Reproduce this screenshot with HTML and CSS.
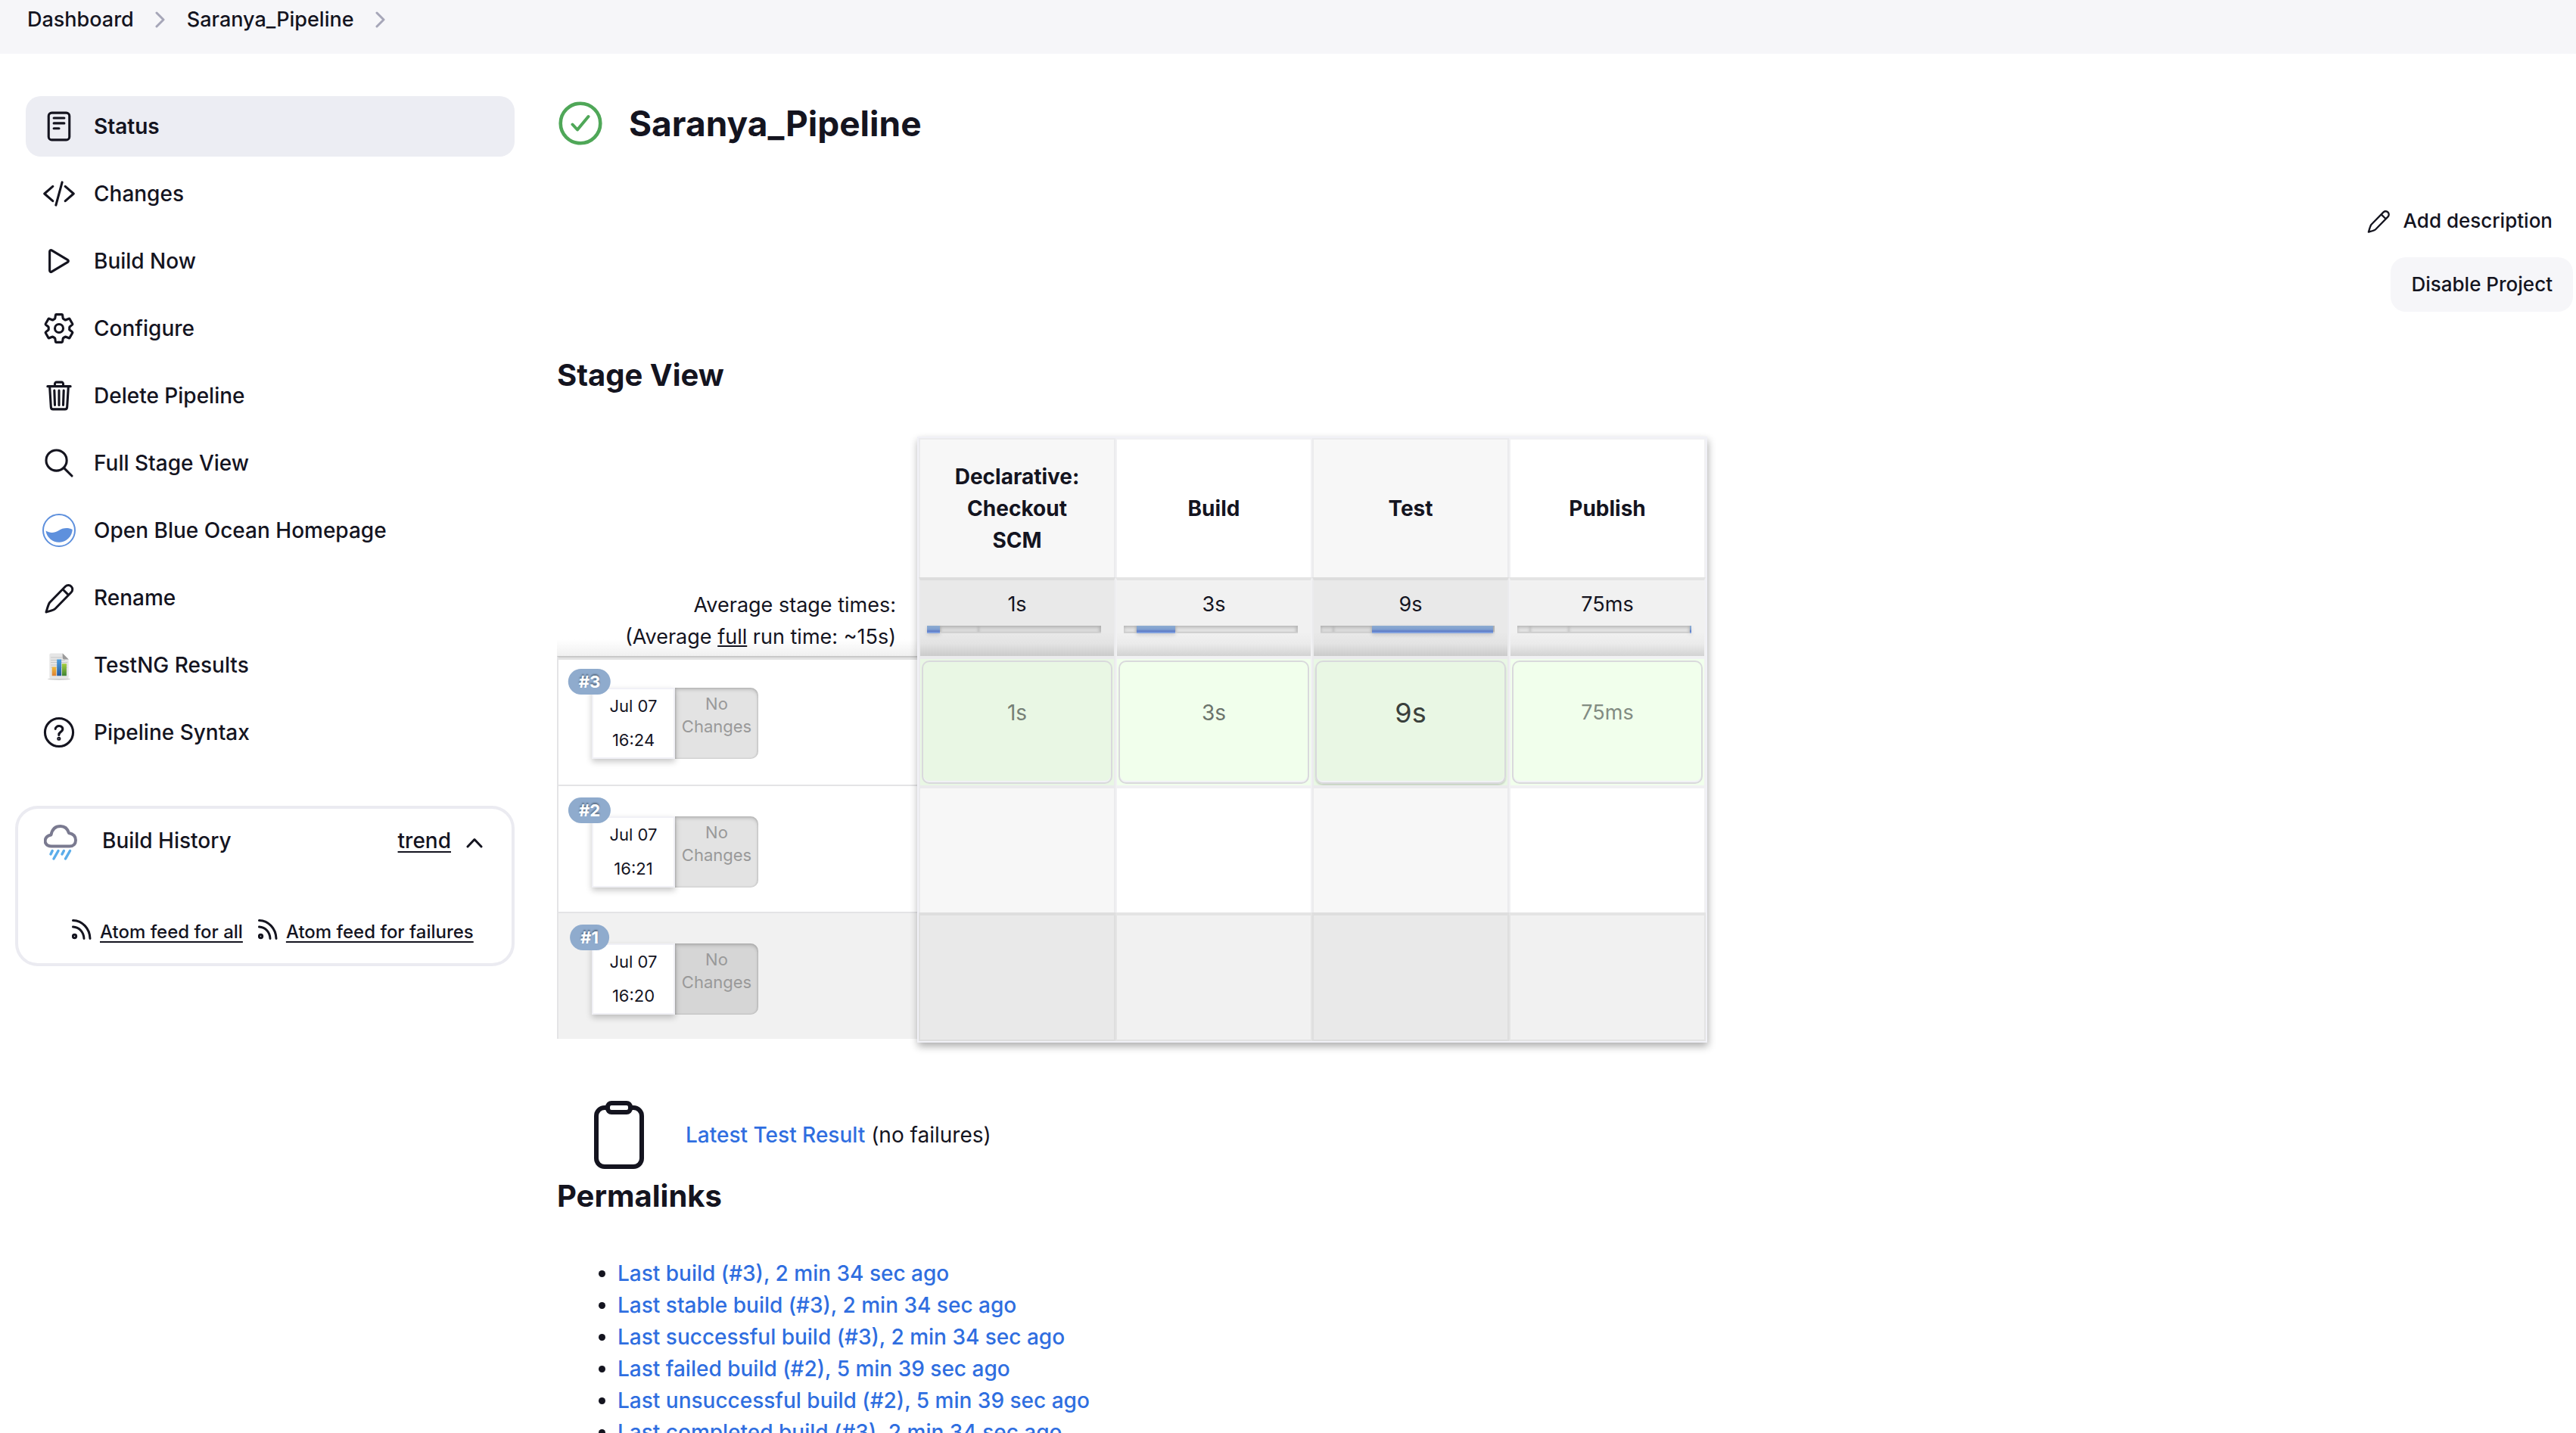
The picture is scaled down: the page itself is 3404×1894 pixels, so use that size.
FILE: index.html
```html
<!DOCTYPE html>
<html lang="en">
<head>
  <meta charset="utf-8">
  <title>Saranya_Pipeline [Jenkins]</title>
  <link rel="stylesheet" href="styles.css">
</head>
<body>
  <nav class="crumbs" aria-label="Breadcrumb">
    <a href="#">Dashboard</a>
    <svg class="crumb-sep" viewBox="0 0 14 22"><path d="M2 2l9 9-9 9"/></svg>
    <a href="#">Saranya_Pipeline</a>
    <svg class="crumb-sep" viewBox="0 0 14 22"><path d="M2 2l9 9-9 9"/></svg>
  </nav>

  <div class="page">
    <aside class="side">
      <nav class="tasks" aria-label="Tasks">
        <a class="task task-active" href="#">
          <svg class="icon" viewBox="0 0 512 512"><rect x="96" y="48" width="320" height="416" rx="48"/><path d="M176 128h160M176 208h160M176 288h80"/></svg>
          Status
        </a>
        <a class="task" href="#">
          <svg class="icon" viewBox="0 0 512 512"><path d="M160 368L32 256l128-112M352 368l128-112-128-112M304 80l-96 352"/></svg>
          Changes
        </a>
        <a class="task" href="#">
          <svg class="icon" viewBox="0 0 512 512"><path d="M112 111v290c0 17.44 17 28.52 31 20.16l247.9-148.37c12.12-7.25 12.12-26.33 0-33.58L143 90.84c-14-8.36-31 2.72-31 20.16z"/></svg>
          Build Now
        </a>
        <a class="task" href="#">
          <svg class="icon" viewBox="0 0 512 512"><circle cx="256" cy="256" r="64"/><path d="M416.39 256a154.34 154.34 0 01-1.53 20.79l45.21 35.46a10.81 10.81 0 012.45 13.75l-42.77 74a10.81 10.81 0 01-13.14 4.59l-44.9-18.08a16.11 16.11 0 00-15.17 1.75A164.48 164.48 0 01325 400.8a15.94 15.94 0 00-8.82 12.14l-6.73 47.89a11.08 11.08 0 01-10.68 9.17h-85.54a11.11 11.11 0 01-10.69-8.87l-6.72-47.82a16.07 16.07 0 00-9-12.22 155.3 155.3 0 01-21.46-12.57 16 16 0 00-15.11-1.71l-44.89 18.07a10.81 10.81 0 01-13.14-4.58l-42.77-74a10.8 10.8 0 012.45-13.75l38.21-30a16.05 16.05 0 006-14.08c-.36-4.17-.58-8.33-.58-12.5s.21-8.27.58-12.35a16 16 0 00-6.07-13.94l-38.19-30A10.81 10.81 0 0149.48 186l42.77-74a10.81 10.81 0 0113.14-4.59l44.9 18.08a16.11 16.11 0 0015.17-1.75A164.48 164.48 0 01187 111.2a15.94 15.94 0 008.82-12.14l6.73-47.89A11.08 11.08 0 01213.23 42h85.54a11.11 11.11 0 0110.69 8.87l6.72 47.82a16.07 16.07 0 009 12.22 155.3 155.3 0 0121.46 12.57 16 16 0 0015.11 1.71l44.89-18.07a10.81 10.81 0 0113.14 4.58l42.77 74a10.8 10.8 0 01-2.45 13.75l-38.21 30a16.05 16.05 0 00-6.05 14.08c.33 4.14.55 8.3.55 12.47z"/></svg>
          Configure
        </a>
        <a class="task" href="#">
          <svg class="icon" viewBox="0 0 512 512"><path d="M112 112l20 320c.95 18.49 14.4 32 32 32h184c17.67 0 30.87-13.51 32-32l20-320M80 112h352M192 112V72a23.93 23.93 0 0124-24h80a23.93 23.93 0 0124 24v40M256 176v224M184 176l8 224M328 176l-8 224"/></svg>
          Delete Pipeline
        </a>
        <a class="task" href="#">
          <svg class="icon" viewBox="0 0 512 512"><circle cx="216" cy="216" r="158"/><path d="M330 330l124 124"/></svg>
          Full Stage View
        </a>
        <a class="task" href="#">
          <svg class="icon-art" viewBox="0 0 44 44"><circle cx="22" cy="22" r="21" fill="#fff" stroke="#5e90dd" stroke-width="2"/><path d="M4.500 22.500C10 26 16 25.500 21 22.500c6-4 13-4.500 18.700-1.500A17.700 17.700 0 0 1 4.500 22.500z" fill="#5e90dd"/></svg>
          Open Blue Ocean Homepage
        </a>
        <a class="task" href="#">
          <svg class="icon icon-fine" viewBox="0 0 44 44"><path d="M30.500 7L9.500 28.500C8 30.500 6.500 36 5 41c5-1.500 10-2.500 12-4.500L38 15a5.400 5.400 0 0 0-7.500-8zM26.800 10.800l7.600 7.600"/></svg>
          Rename
        </a>
        <a class="task" href="#">
          <svg class="icon-art" viewBox="0 0 44 44">
            <defs>
              <linearGradient id="barOrange" x1="0" y1="0" x2="0" y2="1"><stop offset="0" stop-color="#f0bb3c"/><stop offset="1" stop-color="#dd8135"/></linearGradient>
              <linearGradient id="barBlue" x1="0" y1="0" x2="0" y2="1"><stop offset="0" stop-color="#4b9fe0"/><stop offset="1" stop-color="#25599f"/></linearGradient>
              <linearGradient id="barGreen" x1="0" y1="0" x2="0" y2="1"><stop offset="0" stop-color="#a5cf3e"/><stop offset="1" stop-color="#3f8436"/></linearGradient>
            </defs>
            <ellipse cx="22" cy="40.500" rx="15" ry="1.500" fill="#d2d2d2"/>
            <path d="M11.300 6.500h15.400l8 8v23.500a2 2 0 0 1-2 2H11.300a2 2 0 0 1-2-2V8.500a2 2 0 0 1 2-2z" fill="#e6e6e6"/>
            <path d="M11.500 12h14M11.500 15.500h18M11.500 18.500h21M11.500 22h21M11.500 25h21" stroke="#c6c6c6" fill="none"/>
            <path d="M26.700 6.500l8 8h-6a2 2 0 0 1-2-2z" fill="#9a9a9a"/>
            <rect x="12.700" y="24.500" width="5.600" height="11.700" fill="url(#barOrange)"/>
            <rect x="19.200" y="14.500" width="5.900" height="21.700" fill="url(#barBlue)"/>
            <rect x="25.900" y="20.200" width="6" height="16" fill="url(#barGreen)"/>
          </svg>
          TestNG Results
        </a>
        <a class="task" href="#">
          <svg class="icon" viewBox="0 0 512 512"><circle cx="256" cy="256" r="216"/><path d="M200 202.290s.84-17.500 19.570-32.570C230.680 160.770 244 158.180 256 158c10.930-.14 20.690 1.670 26.530 4.450 10 4.760 29.470 16.380 29.470 41.090 0 26-17 37.810-36.370 50.800S254 281.430 254 296"/><circle cx="254" cy="352" r="12"/></svg>
          Pipeline Syntax
        </a>
      </nav>

      <section class="history">
        <div class="history-head">
          <svg class="cloud" viewBox="0 0 44 48"><path d="M10 28.500C2 28.500.5 22 2.500 18c1.500-3 4.500-4 7-4.500C11 5 16 2 22 2c6 0 9.500 4 11 9 5 1 9 4 9 9.500 0 5-3 8-8 8z" stroke="#7a7a90" stroke-width="4"/><path d="M11.200 34.500L9 39M19 34.500L13 45M26.400 34.500L24 39M34.500 34.500l-6 10.500" stroke="#5badea" stroke-width="3.500"/></svg>
          <span class="history-title">Build History</span>
          <a class="underlined" href="#">trend</a>
          <button class="collapse" type="button" aria-label="Collapse"><svg viewBox="0 0 22 14"><path d="M2 12l9-9.500 9 9.500"/></svg></button>
        </div>
        <div class="feeds">
          <svg class="rss" viewBox="0 0 26 34"><path d="M1.500 1.500C14 2 23.500 12 24 25.500M1.500 10C10 10.500 15.500 17 16 25.500"/><circle cx="3.500" cy="22.500" r="2.200"/></svg>
          <a class="underlined" href="#">Atom feed for all</a>
          <svg class="rss rss-next" viewBox="0 0 26 34"><path d="M1.500 1.500C14 2 23.500 12 24 25.500M1.500 10C10 10.500 15.500 17 16 25.500"/><circle cx="3.500" cy="22.500" r="2.200"/></svg>
          <a class="underlined" href="#">Atom feed for failures</a>
        </div>
      </section>
    </aside>

    <main class="main">
      <div class="title-row">
        <svg class="status-icon" viewBox="0 0 62 62"><circle cx="31" cy="31" r="26.300" stroke-width="4.600"/><path d="M20.500 32.500l6.500 7L41.500 22" stroke-width="4"/></svg>
        <h1>Saranya_Pipeline</h1>
      </div>
      <div class="actions">
        <button class="button button-plain" type="button">
          <svg class="icon-small icon-fine" viewBox="0 0 44 44"><path d="M30.500 7L9.500 28.500C8 30.500 6.500 36 5 41c5-1.500 10-2.500 12-4.500L38 15a5.400 5.400 0 0 0-7.500-8zM26.800 10.800l7.600 7.600"/></svg>
          Add description
        </button>
        <button class="button" type="button">Disable Project</button>
      </div>

      <h2>Stage View</h2>
      <div class="stage-view">
        <div class="runs">
          <div class="averages">
            <div>Average stage times:</div>
            <div>(Average <u>full</u> run time: ~15s)</div>
          </div>
          <div class="run run-first">
            <div class="run-date"><a class="badge" href="#">#3</a><div>Jul 07</div><div>16:24</div></div>
            <div class="run-changes">No<br>Changes</div>
          </div>
          <div class="run">
            <div class="run-date"><a class="badge" href="#">#2</a><div>Jul 07</div><div>16:21</div></div>
            <div class="run-changes">No<br>Changes</div>
          </div>
          <div class="run run-shaded">
            <div class="run-date"><a class="badge" href="#">#1</a><div>Jul 07</div><div>16:20</div></div>
            <div class="run-changes">No<br>Changes</div>
          </div>
        </div>
        <table class="stages">
          <thead>
            <tr class="row-names"><th>Declarative: Checkout SCM</th><th>Build</th><th>Test</th><th>Publish</th></tr>
          </thead>
          <tbody>
            <tr class="row-totals">
              <td>1s<div class="bar"><i class="on"></i><i></i><i></i><i></i></div></td>
              <td>3s<div class="bar"><i></i><i class="on"></i><i></i><i></i></div></td>
              <td>9s<div class="bar"><i></i><i></i><i class="on"></i><i></i></div></td>
              <td>75ms<div class="bar"><i></i><i></i><i></i><i class="on"></i></div></td>
            </tr>
            <tr class="row-run row-ok">
              <td><div class="result result-dim">1s</div></td>
              <td><div class="result result-mid">3s</div></td>
              <td><div class="result result-long">9s</div></td>
              <td><div class="result">75ms</div></td>
            </tr>
            <tr class="row-run row-empty"><td></td><td></td><td></td><td></td></tr>
            <tr class="row-run row-shaded"><td></td><td></td><td></td><td></td></tr>
          </tbody>
        </table>
      </div>

      <div class="test-result">
        <svg class="clipboard" viewBox="0 0 66 90"><rect x="3" y="9" width="60" height="78" rx="11"/><rect x="18" y="3" width="30" height="12" rx="5"/></svg>
        <div><a class="link" href="#">Latest Test Result</a> (no failures)</div>
      </div>

      <h2 class="permalinks-title">Permalinks</h2>
      <ul class="permalinks">
        <li><a class="link" href="#">Last build (#3), 2 min 34 sec ago</a></li>
        <li><a class="link" href="#">Last stable build (#3), 2 min 34 sec ago</a></li>
        <li><a class="link" href="#">Last successful build (#3), 2 min 34 sec ago</a></li>
        <li><a class="link" href="#">Last failed build (#2), 5 min 39 sec ago</a></li>
        <li><a class="link" href="#">Last unsuccessful build (#2), 5 min 39 sec ago</a></li>
        <li><a class="link" href="#">Last completed build (#3), 2 min 34 sec ago</a></li>
      </ul>
    </main>
  </div>
</body>
</html>
```
FILE: styles.css
```css
* {
  box-sizing: border-box;
}

body {
  margin: 0;
  height: 100vh;
  overflow: hidden;
  background: #fff;
  color: #14141f;
  font: 400 27px/42px Inter, "Liberation Sans", sans-serif;
}

a {
  color: inherit;
  text-decoration: none;
}

button {
  border: 0;
  padding: 0;
  background: none;
  color: inherit;
  font: inherit;
}

svg {
  display: block;
  flex: none;
  fill: none;
  stroke-linecap: round;
  stroke-linejoin: round;
}

h1,
h2 {
  margin: 0;
  font-weight: 700;
}

h1 {
  font-size: 46px;
  line-height: 62px;
}

h2 {
  font-size: 40px;
  line-height: 52px;
}

/* Breadcrumb bar */
.crumbs {
  display: flex;
  align-items: center;
  gap: 28px;
  padding: 5px 36px 24px;
  background: #f6f6f9;
  font-weight: 500;
}

.crumb-sep {
  width: 14px;
  height: 22px;
  stroke: #a6a6b8;
  stroke-width: 3;
}

.page {
  display: grid;
  grid-template-columns: 680px 1fr;
}

/* Sidebar */
.side {
  padding: 56px 0 0 20px;
}

.tasks {
  display: flex;
  flex-direction: column;
  gap: 9px;
  padding-left: 14px;
}

.task {
  display: flex;
  align-items: center;
  gap: 24px;
  height: 80px;
  padding-left: 22px;
  border-radius: 20px;
  font-size: 28px;
  font-weight: 500;
}

.task-active {
  background: #ecedf3;
  font-weight: 600;
}

.icon,
.icon-art {
  width: 44px;
  height: 44px;
}

.icon {
  stroke: #14141f;
  stroke-width: 36;
}

.icon-small {
  width: 34px;
  height: 34px;
  stroke: #14141f;
}

.icon-fine {
  stroke-width: 3;
}

.history {
  margin-top: 57px;
  padding: 19px 38px 24px 34px;
  border: 4px solid #ebebf1;
  border-radius: 30px;
}

.history-head {
  display: flex;
  align-items: center;
  height: 46px;
  font-size: 28px;
  font-weight: 500;
}

.cloud {
  width: 44px;
  height: 48px;
  margin-top: 6px;
}

.history-title {
  flex: 1;
  padding-left: 33px;
}

.underlined {
  text-decoration: underline;
  text-decoration-thickness: 2px;
  text-underline-offset: 4px;
}

.collapse {
  margin-left: 20px;
}

.collapse svg {
  width: 22px;
  height: 14px;
  margin-top: 6px;
  stroke: #14141f;
  stroke-width: 3;
}

.feeds {
  display: flex;
  gap: 11px;
  margin-top: 81px;
  padding-left: 37px;
  font-size: 24px;
  font-weight: 500;
  line-height: 34px;
  white-space: nowrap;
}

.rss {
  width: 26px;
  height: 34px;
  stroke: #14141f;
  stroke-width: 3;
}

.rss-next {
  margin-left: 9px;
}

/* Main panel */
.main {
  min-width: 0;
  padding: 61px 4px 0 56px;
}

.title-row {
  display: flex;
  align-items: center;
  gap: 33px;
}

.status-icon {
  width: 62px;
  height: 62px;
  stroke: #4fa758;
}

.actions {
  display: flex;
  flex-direction: column;
  align-items: flex-end;
  gap: 12px;
  margin: 62px 0 58px;
}

.button {
  display: flex;
  align-items: center;
  gap: 16px;
  height: 72px;
  padding: 0 27px;
  border-radius: 20px;
  background: #f6f6f9;
  font-size: 26px;
  font-weight: 500;
}

.button-plain {
  background: none;
}

/* Stage view */
.stage-view {
  display: flex;
  margin-top: 55px;
}

.runs {
  width: 476px;
}

.averages {
  display: flex;
  flex-direction: column;
  justify-content: flex-end;
  height: 290px;
  padding: 0 28px 4px 0;
  background: linear-gradient(to top, #f0f0f0, #fff 22px);
  text-align: right;
}

.run {
  display: flex;
  height: 168px;
  padding: 40px 0 0 44px;
  border: 2px solid #e4e4e6;
  border-width: 2px 0 0 2px;
}

.run-first {
  height: 170px;
  border-top-color: #c9c9c9;
  box-shadow: inset 0 3px 0 #e2e2e2;
}

.run-shaded {
  background: #f1f1f1;
}

.run-date {
  position: relative;
  width: 110px;
  height: 94px;
  border: 2px solid #f1f1f6;
  background: #fff;
  box-shadow: 0 4px 8px rgba(0, 0, 0, 0.22);
  font-size: 22px;
  line-height: 45px;
  text-align: center;
}

.badge {
  position: absolute;
  top: -27px;
  left: -5px;
  padding: 0 14px;
  border-radius: 17px;
  background: #8fabcd;
  color: #fff;
  font-weight: 700;
  line-height: 34px;
  text-shadow: 0 -2px 2px rgba(0, 0, 0, 0.35);
  transform: translateX(-50%);
}

.run-changes {
  width: 110px;
  height: 94px;
  padding-top: 6px;
  border-radius: 0 10px 10px 0;
  background: rgba(0, 0, 0, 0.11);
  box-shadow: inset 0 3px 4px rgba(0, 0, 0, 0.15), inset 0 0 3px rgba(0, 0, 0, 0.2);
  color: #999;
  font-size: 22px;
  line-height: 30px;
  text-align: center;
}

.stages {
  position: relative;
  width: 1044px;
  border: 2px solid #f1f1f7;
  border-spacing: 0;
  table-layout: fixed;
  background: #fff;
  box-shadow: 1px 5px 10px rgba(0, 0, 0, 0.32);
  text-align: center;
}

.stages th,
.stages td {
  padding: 0;
  border: solid #f1f1f3;
  border-width: 4px 2px 0;
}

.stages th {
  height: 184px;
  padding: 0 40px;
  border-top-width: 2px;
  font-size: 28px;
  font-weight: 700;
}

.stages tr > :nth-child(odd) {
  background: #f7f7f7;
  border-color: #ebebed;
}

.stages .row-totals td {
  height: 104px;
  padding-top: 11px;
  border-top-color: #e4e4e4;
  background: linear-gradient(to top, #d2d2d2, #ebebeb 16px, #f1f1f1 32px);
  vertical-align: top;
}

.stages .row-totals td:nth-child(odd) {
  border-top-color: #dddddd;
  background: linear-gradient(to top, #cbcbcb, #e3e3e3 16px, #e9e9e9 32px);
}

/* One track segment per stage, sized by its share of the run */
.bar {
  display: grid;
  grid-template-columns: 17fr 51fr 160fr 2fr;
  width: 230px;
  height: 10px;
  margin: 7px 0 0 9px;
}

.bar i {
  border-bottom: 2px solid #d0d0d0;
  background: rgba(0, 0, 0, 0.05);
  box-shadow: inset 0 2px 4px rgba(0, 0, 0, 0.22);
}

.bar .on {
  border-bottom-color: #7f9fdd;
  background: linear-gradient(#8dacd0, #7f9fd0 60%, #5573c5);
  box-shadow: 0 2px 5px rgba(0, 0, 0, 0.15);
}

.row-run td {
  height: 168px;
}

.stages .row-ok td {
  height: 170px;
  background: #f1ffec;
  background-clip: padding-box;
  vertical-align: top;
}

.stages .row-ok td:nth-child(odd) {
  background-color: #e9f7e4;
}

.stages .row-shaded td {
  height: 170px;
  background: #f1f1f1;
  border-color: #e4e4e4;
  border-bottom-width: 2px;
}

.stages .row-shaded td:nth-child(odd) {
  background: #e9e9e9;
  border-color: #dedede;
}

.result {
  display: flex;
  align-items: center;
  justify-content: center;
  height: 163px;
  margin: 2px;
  padding-bottom: 26px;
  border: 2px solid #d9d9dc;
  border-radius: 10px;
  box-shadow: inset 0 -2px 0 #f1f1f5;
  color: #828c82;
  font-size: 27px;
}

.result-dim {
  color: #768076;
  font-size: 28px;
}

.result-mid {
  color: #6b746b;
  font-size: 28px;
}

.result-long {
  color: #3a403c;
  font-size: 36px;
  box-shadow: inset 0 -2px 0 #f1f1f5, 0 2px 2px rgba(0, 0, 0, 0.15);
}

/* Results and permalinks */
.test-result {
  display: flex;
  align-items: center;
  gap: 55px;
  margin: 77px 0 10px;
  padding-left: 49px;
  font-size: 28px;
}

.clipboard {
  width: 66px;
  height: 90px;
  fill: #fff;
  stroke: #14141f;
  stroke-width: 6;
}

.link {
  color: #2f6ee0;
  font-weight: 500;
}

.permalinks {
  margin: 55px 0 0;
  padding-left: 80px;
  font-size: 28px;
}
```
